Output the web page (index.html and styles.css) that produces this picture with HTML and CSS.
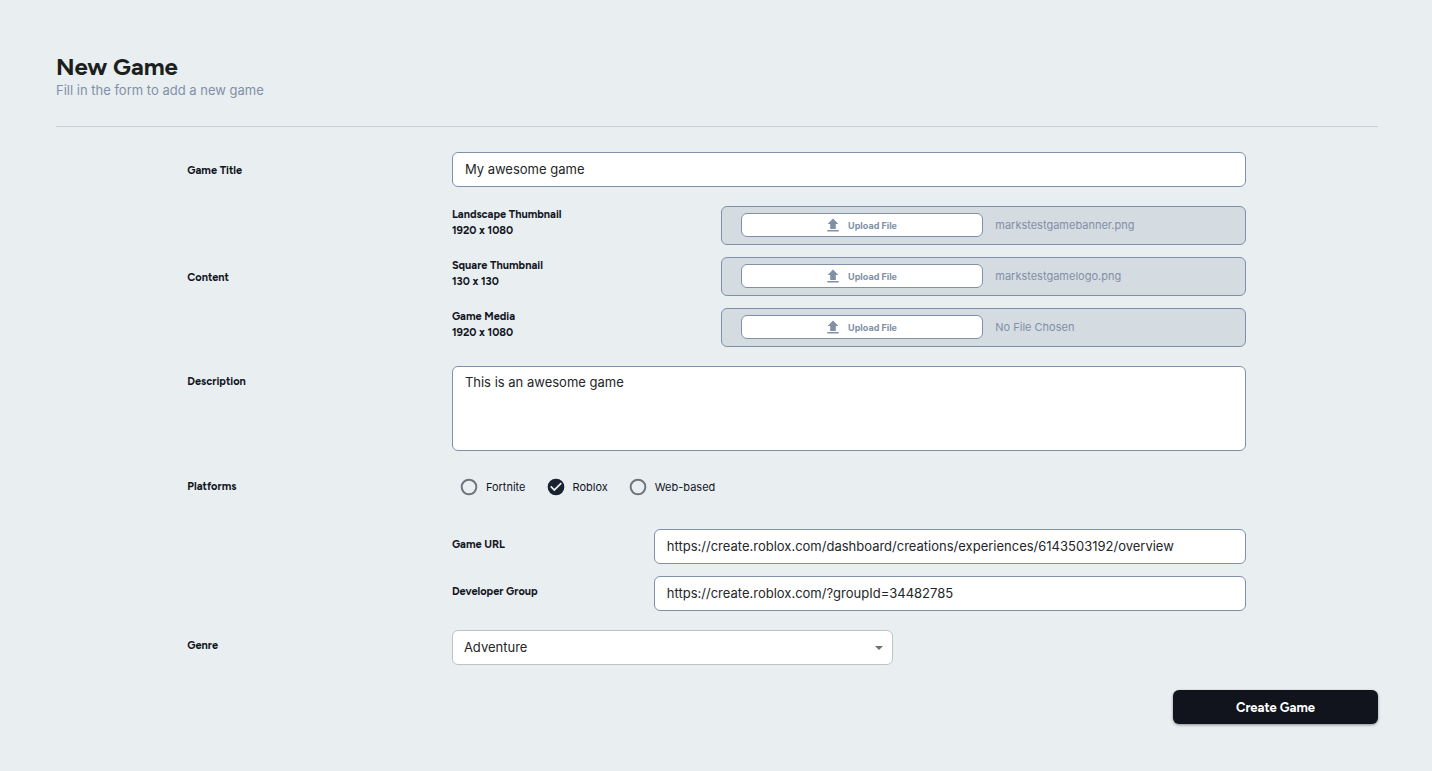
FILE: index.html
```html
<!DOCTYPE html>
<html lang="en">
<head>
<meta charset="utf-8">
<title>New Game</title>
<link rel="stylesheet" href="styles.css">
</head>
<body>
<svg class="sprite" aria-hidden="true">
  <symbol id="upload" viewBox="0 0 12 14"><path d="M6 0.4 11.3 6H8.8v5H3.2V6H0.7ZM0.3 12h11.4v1.4H0.3Z"/></symbol>
  <symbol id="empty-circle" viewBox="0 0 24 24"><path d="M12 2a10 10 0 1 0 0 20 10 10 0 0 0 0-20Zm0 17.6a7.6 7.6 0 1 1 0-15.2 7.6 7.6 0 0 1 0 15.2Z"/></symbol>
  <symbol id="check-circle" viewBox="0 0 24 24"><path d="M12 2a10 10 0 1 0 0 20 10 10 0 0 0 0-20Zm-2 15-5-5 1.41-1.41L10 14.17l7.59-7.59L19 8l-9 9Z"/></symbol>
</svg>
<main class="page">
  <header class="page-header">
    <h1 class="page-title">New Game</h1>
    <p class="page-subtitle">Fill in the form to add a new game</p>
  </header>
  <form class="game-form">
    <div class="rows">
      <div class="row">
        <label class="label label-low" for="title">Game Title</label>
        <input class="field" id="title" type="text" value="My awesome game">
      </div>
      <div class="row">
        <span class="label label-low">Content</span>
        <div class="uploads">
          <div class="upload-row">
            <label class="label" for="landscape">Landscape Thumbnail<br>1920 x 1080</label>
            <div class="upload-box">
              <button class="upload-button" id="landscape" type="button"><svg class="upload-icon"><use href="#upload"/></svg>Upload File</button>
              <span class="file-name">markstestgamebanner.png</span>
            </div>
          </div>
          <div class="upload-row">
            <label class="label" for="square">Square Thumbnail<br>130 x 130</label>
            <div class="upload-box">
              <button class="upload-button" id="square" type="button"><svg class="upload-icon"><use href="#upload"/></svg>Upload File</button>
              <span class="file-name">markstestgamelogo.png</span>
            </div>
          </div>
          <div class="upload-row">
            <label class="label" for="media">Game Media<br>1920 x 1080</label>
            <div class="upload-box">
              <button class="upload-button" id="media" type="button"><svg class="upload-icon"><use href="#upload"/></svg>Upload File</button>
              <span class="file-name">No File Chosen</span>
            </div>
          </div>
        </div>
      </div>
      <div class="row row-top">
        <label class="label" for="description">Description</label>
        <textarea class="field description" id="description">This is an awesome game</textarea>
      </div>
      <div class="row row-platforms">
        <span class="label" id="platforms">Platforms</span>
        <div class="platforms" role="radiogroup" aria-labelledby="platforms">
          <label class="platform"><input class="platform-input" type="radio" name="platform"><svg class="mark mark-off"><use href="#empty-circle"/></svg><svg class="mark mark-on"><use href="#check-circle"/></svg>Fortnite</label>
          <label class="platform"><input class="platform-input" type="radio" name="platform" checked><svg class="mark mark-off"><use href="#empty-circle"/></svg><svg class="mark mark-on"><use href="#check-circle"/></svg>Roblox</label>
          <label class="platform"><input class="platform-input" type="radio" name="platform"><svg class="mark mark-off"><use href="#empty-circle"/></svg><svg class="mark mark-on"><use href="#check-circle"/></svg>Web-based</label>
        </div>
      </div>
      <div class="links">
        <div class="link-row">
          <label class="label label-high" for="url">Game URL</label>
          <input class="field" id="url" type="text" value="https://create.roblox.com/dashboard/creations/experiences/6143503192/overview">
        </div>
        <div class="link-row">
          <label class="label label-high" for="group">Developer Group</label>
          <input class="field" id="group" type="text" value="https://create.roblox.com/?groupId=34482785">
        </div>
      </div>
      <div class="row">
        <label class="label label-high" for="genre">Genre</label>
        <div class="select-wrap">
          <select class="field select" id="genre"><option>Adventure</option></select>
        </div>
      </div>
    </div>
    <button class="submit" type="submit">Create Game</button>
  </form>
</main>
</body>
</html>
```

FILE: styles.css
```css
* { box-sizing: border-box; }
body {
  margin: 0;
  background: #e9eef1;
  color: #12151e;
  font-family: Inter, "Liberation Sans", sans-serif;
  font-size: 13px;
}
.sprite { position: absolute; width: 0; height: 0; }
.page { padding: 52px 54px 47px 55px; }
.page-header { margin-left: 1px; padding-bottom: 28px; border-bottom: 1px solid #c8cfd5; }
.page-title {
  margin: 0;
  color: #1c1f20;
  font-family: Figtree, Inter, sans-serif;
  font-size: 24px;
  font-weight: 700;
  line-height: 30px;
}
.page-subtitle { margin: 0; color: #8290a7; line-height: 16px; }
.game-form { display: flex; flex-direction: column; gap: 25px; padding-top: 25px; }
.rows { display: flex; flex-direction: column; gap: 19px; width: 80%; margin: 0 auto; }
.row { display: grid; grid-template-columns: 1fr 3fr; align-items: center; }
.row-top { align-items: start; }
.row-top > .label { padding-top: 8px; }
.label {
  font-family: Figtree, Inter, sans-serif;
  font-size: 11px;
  font-weight: 700;
  line-height: 16px;
}
.label-low { padding-top: 2px; }
.label-high { padding-bottom: 4px; }
.field {
  display: block;
  width: 100%;
  min-width: 0;
  height: 35px;
  padding: 0 12px 2px;
  border: 1px solid #8090ab;
  border-radius: 6px;
  outline: 0;
  background: #fff;
  color: #242628;
  font: inherit;
}
.description { height: 85px; padding-top: 6px; line-height: 18px; resize: none; }
.uploads { display: flex; flex-direction: column; gap: 12px; }
.upload-row { display: grid; grid-template-columns: 269fr 525fr; align-items: center; }
.upload-row > .label { padding-bottom: 6px; }
.upload-box {
  display: flex;
  align-items: center;
  gap: 12px;
  height: 39px;
  padding: 0 19px 1px;
  border: 1px solid #8090ab;
  border-radius: 6px;
  background: #d4dbe1;
  color: #8190a8;
  font-size: 11px;
}
.upload-button {
  display: flex;
  align-items: center;
  justify-content: center;
  gap: 9px;
  width: 50%;
  height: 24px;
  padding: 0;
  border: 1px solid #8090ab;
  border-radius: 6px;
  background: #fff;
  color: #8090a7;
  font-family: Inter, "Liberation Sans", sans-serif;
  font-size: 9px;
  font-weight: 700;
}
.upload-icon { width: 12px; height: 14px; fill: currentColor; }
.platforms { display: flex; gap: 20px; padding-left: 7px; font-size: 11px; }
.platform { display: flex; align-items: center; gap: 7px; line-height: 20px; }
.platform-input { position: absolute; opacity: 0; }
.mark { width: 20px; height: 20px; }
.mark-off { fill: #70757d; }
.mark-on { display: none; fill: #182230; }
.platform-input:checked ~ .mark-off { display: none; }
.platform-input:checked ~ .mark-on { display: block; }
.row-platforms { padding: 7px 0 13px; }
.links { display: flex; flex-direction: column; gap: 12px; width: 75%; margin-left: auto; }
.link-row { display: grid; grid-template-columns: 202fr 592fr; align-items: center; }
.select-wrap { position: relative; width: 441px; max-width: 100%; }
.select-wrap::after {
  content: "";
  position: absolute;
  top: 16px;
  right: 10px;
  border: 4px solid transparent;
  border-top-color: #707070;
  border-bottom: 0;
  pointer-events: none;
}
.select { appearance: none; padding: 0 11px 2px; border-color: #bfc1c3; }
.submit {
  align-self: flex-end;
  width: 205px;
  height: 34px;
  border: 0;
  border-radius: 6px;
  background: #11141c;
  box-shadow: 0 1px 3px rgba(0, 0, 0, 0.4);
  color: #fff;
  font-family: Figtree, Inter, sans-serif;
  font-size: 13px;
  font-weight: 700;
}
```
